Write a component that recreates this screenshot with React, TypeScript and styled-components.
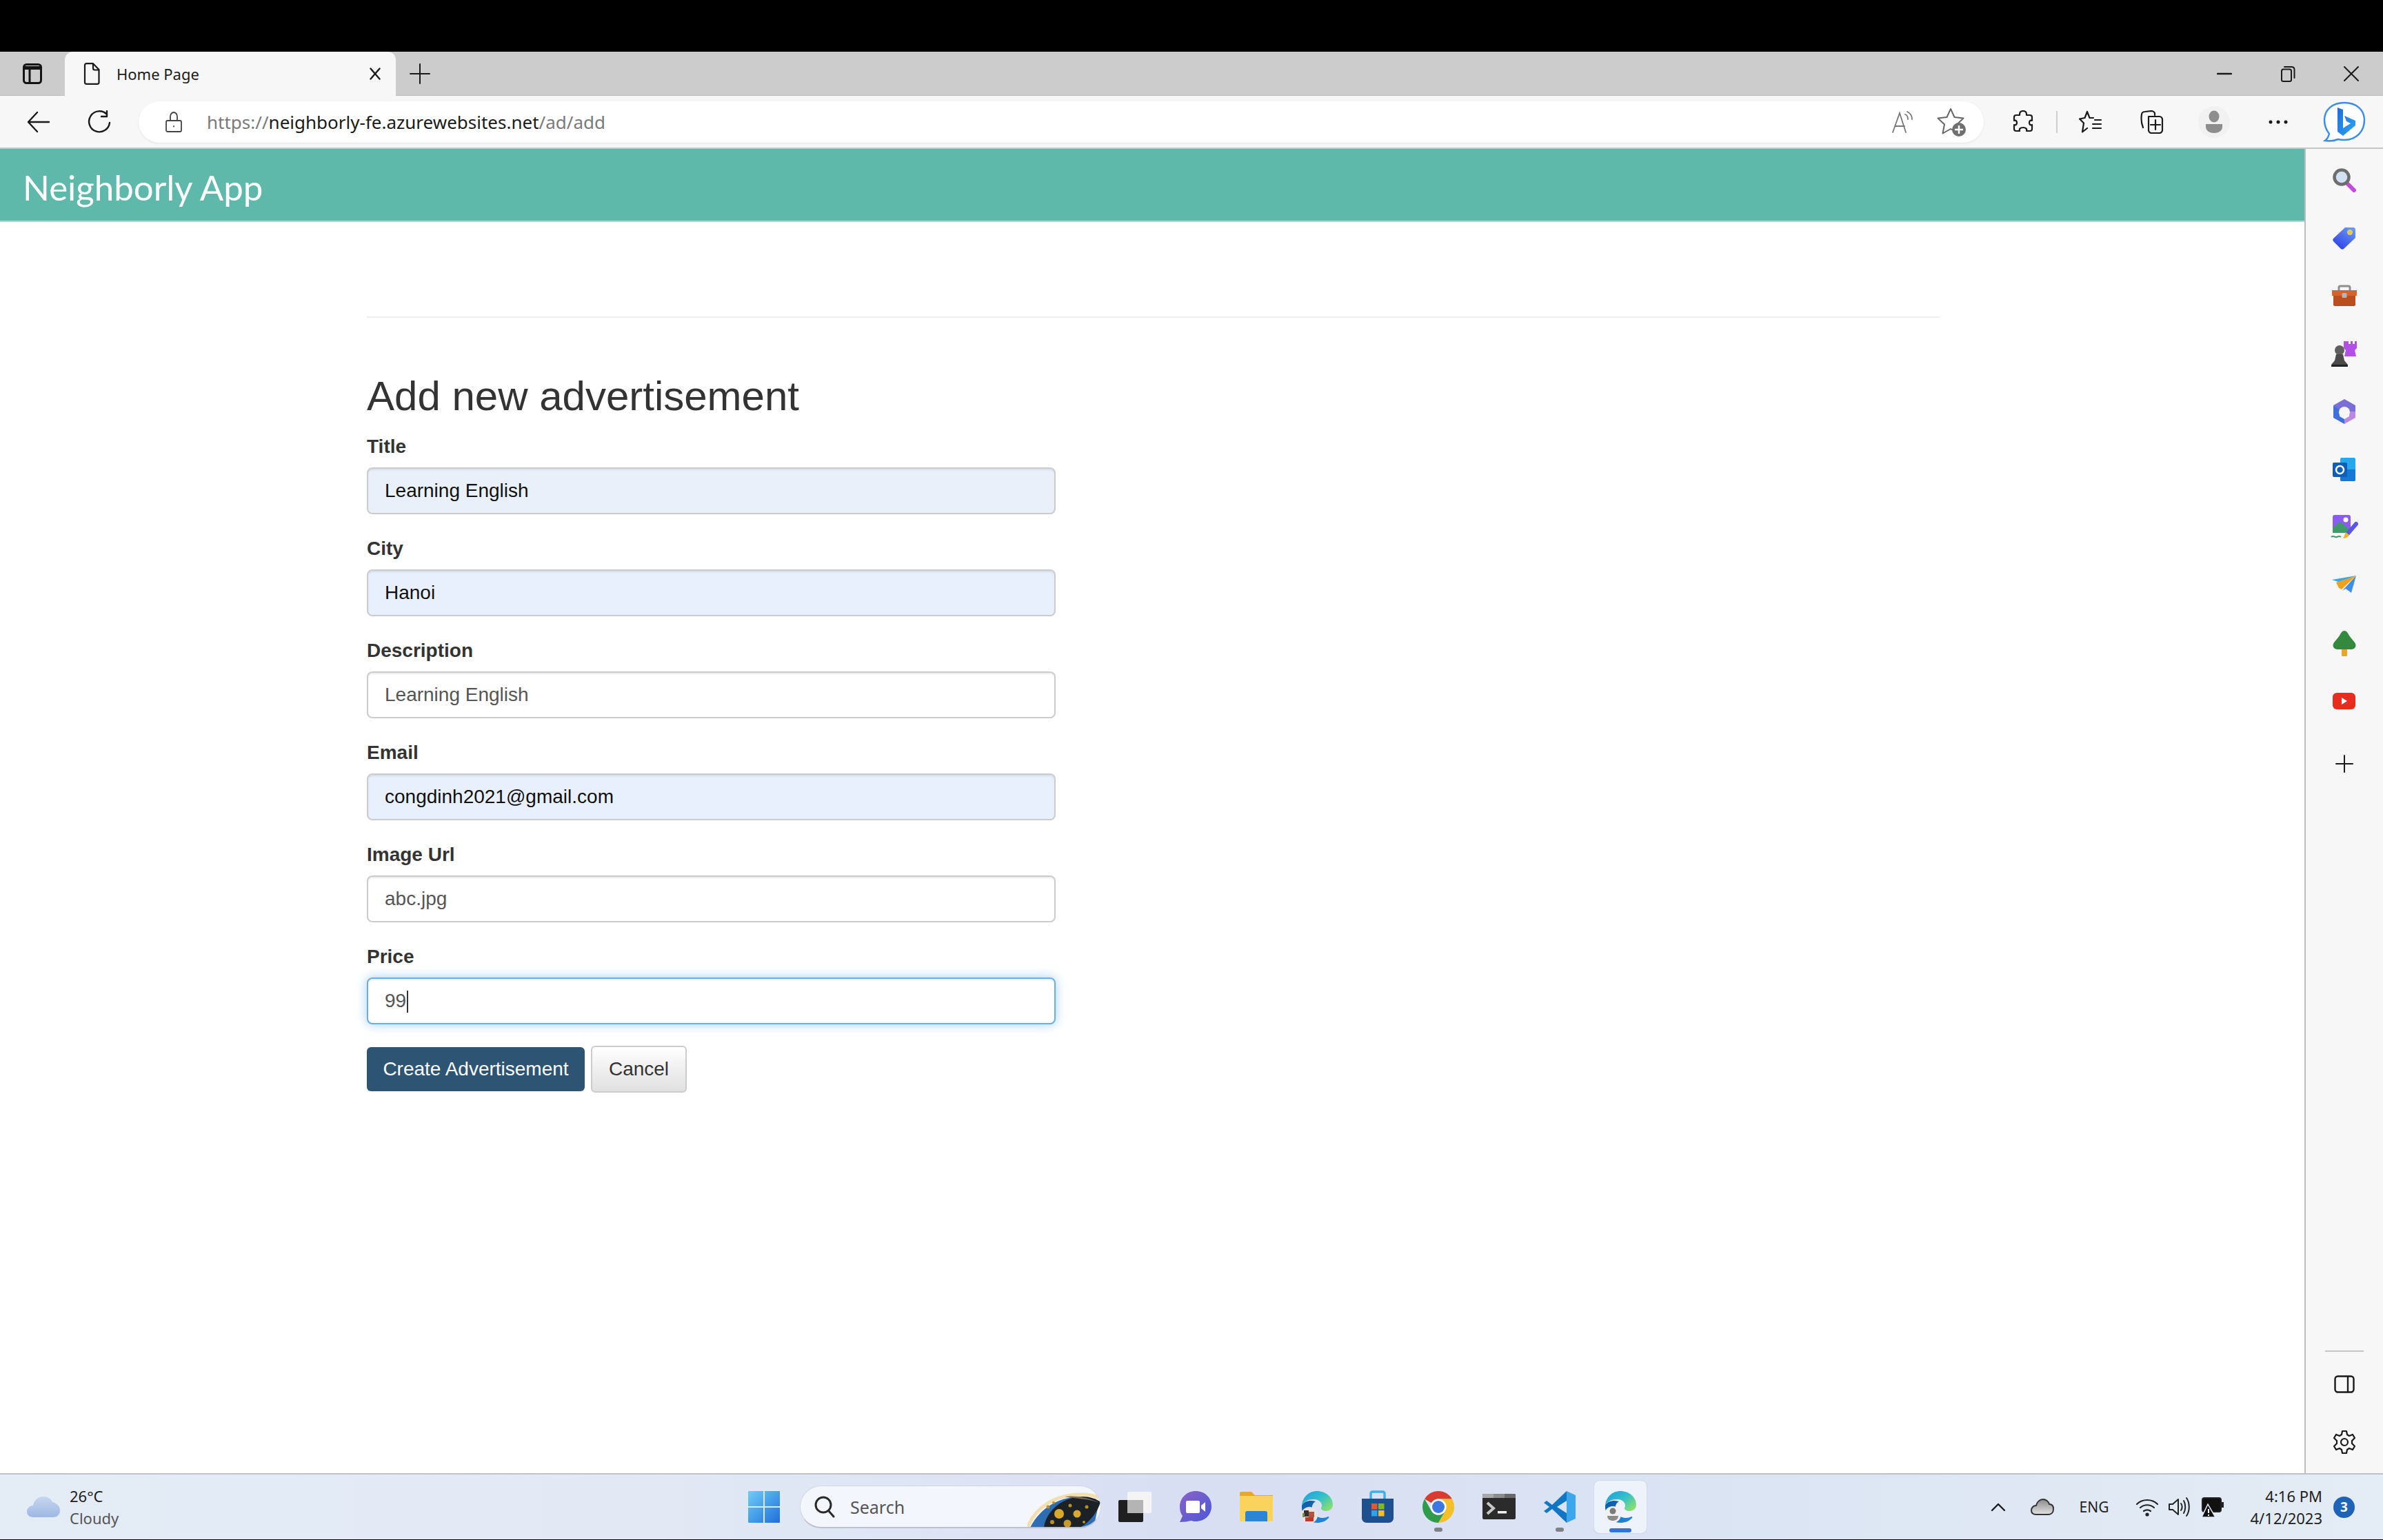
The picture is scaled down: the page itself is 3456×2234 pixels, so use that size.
import styled, { createGlobalStyle } from 'styled-components'

const GlobalStyle = createGlobalStyle`
  html, body {
    margin: 0;
    padding: 0;
    overflow: hidden;
    background: #fff;
  }
  * { box-sizing: border-box; }
`

const Screen = styled.div`
  width: 3456px;
  height: 2234px;
  display: flex;
  flex-direction: column;
  font-family: 'Liberation Sans', Arial, sans-serif;
`

const TopBlack = styled.div`
  height: 75px;
  background: #000;
  flex: none;
`

/* browser chrome */
const TabStrip = styled.div`
  height: 64px;
  flex: none;
  display: flex;
  align-items: stretch;
  background: #cccccc;
  border-bottom: 1px solid #bdbdbd;
`

const IconSlot = styled.div<{ $w: number }>`
  width: ${(p) => p.$w}px;
  flex: none;
  display: flex;
  align-items: center;
  justify-content: center;
`

const Tab = styled.div`
  width: 480px;
  flex: none;
  display: flex;
  align-items: center;
  padding: 0 22px 0 27px;
  background: #f7f7f7;
  border-radius: 12px 12px 0 0;
  margin-bottom: -1px;
`

const TabTitle = styled.span`
  margin-left: 24px;
  font-family: 'Noto Sans', sans-serif;
  font-size: 22px;
  color: #1c1c1c;
  flex: 1;
`

const WindowControls = styled.div`
  margin-left: auto;
  display: flex;
`

const Toolbar = styled.div`
  height: 77px;
  flex: none;
  display: flex;
  align-items: center;
  padding-left: 12px;
  background: #f7f7f7;
  border-bottom: 2px solid #c6c6c6;
`

const AddressBar = styled.div`
  width: 2676px;
  height: 60px;
  margin-left: 13px;
  flex: none;
  display: flex;
  align-items: center;
  padding: 0 22px 0 39px;
  background: #fff;
  border-radius: 30px;
  box-shadow: 0 1px 3px rgba(0, 0, 0, 0.08);
`

const Url = styled.div`
  margin-left: 36px;
  flex: 1;
  font-family: 'Noto Sans', sans-serif;
  font-size: 26px;
  color: #7a7a7a;
`

const UrlHost = styled.span`
  color: #1a1a1a;
`

const AddressActions = styled.div`
  display: flex;
  align-items: center;
  gap: 34px;
`

const ToolGroup = styled.div`
  display: flex;
  align-items: center;
  margin-left: 12px;
`

const ToolSep = styled.div`
  width: 2px;
  height: 32px;
  margin: 0 2px 0 3px;
  background: #cfcfcf;
`

const ProfileCircle = styled.div`
  width: 46px;
  height: 46px;
  border-radius: 50%;
  background: #f1f1f1;
  display: flex;
  align-items: center;
  justify-content: center;
`

/* page + edge sidebar */
const Middle = styled.div`
  flex: 1;
  min-height: 0;
  display: flex;
`

const Page = styled.div`
  flex: 1;
  min-width: 0;
  background: #fff;
`

const NavBar = styled.div`
  height: 106px;
  display: flex;
  align-items: center;
  padding: 6px 0 0 33px;
  background: #5fb9aa;
  border-bottom: 2px solid #a9dcd2;
`

const Brand = styled.div`
  font-family: 'Lato', sans-serif;
  font-size: 51px;
  color: #fff;
`

const Content = styled.div`
  padding: 137px 0 0 532px;
`

const Rule = styled.hr`
  width: 2281px;
  height: 2px;
  margin: 0 0 81px;
  border: 0;
  background: #eee;
`

const Form = styled.form`
  width: 999px;
`

const Heading = styled.h2`
  width: 1400px;
  margin: 0 0 20px;
  font-size: 60px;
  line-height: 66px;
  font-weight: 400;
  color: #333;
`

const FormGroup = styled.div`
  position: relative;
  margin-bottom: 30px;
`

const Label = styled.label`
  display: block;
  margin-bottom: 10px;
  font-size: 28px;
  line-height: 40px;
  font-weight: 700;
  color: #333;
`

const Field = styled.input<{ $fill?: string; $focus?: boolean }>`
  display: block;
  width: 100%;
  height: 68px;
  padding: 12px 24px;
  font-family: 'Liberation Sans', Arial, sans-serif;
  font-size: 28px;
  border-radius: 8px;
  outline: none;
  color: ${(p) => (p.$fill ? '#111' : '#555')};
  background: ${(p) => p.$fill ?? '#fff'};
  border: 2px solid ${(p) => (p.$focus ? '#66afe9' : '#ccc')};
  box-shadow: ${(p) =>
    p.$focus
      ? 'inset 0 2px 2px rgba(0,0,0,.075), 0 0 16px rgba(102,175,233,.6)'
      : 'inset 0 2px 2px rgba(0,0,0,.075)'};
`

const Caret = styled.span`
  position: absolute;
  left: 58px;
  bottom: 17px;
  width: 2px;
  height: 32px;
  background: #333;
`

const Actions = styled.div`
  display: flex;
  align-items: center;
  gap: 9px;
  margin-top: 31px;
`

const SubmitButton = styled.button`
  width: 316px;
  height: 64px;
  border: 0;
  border-radius: 6px;
  padding: 0;
  background: #2e5474;
  color: #fff;
  font-family: 'Liberation Sans', Arial, sans-serif;
  font-size: 28px;
`

const CancelButton = styled.button`
  width: 139px;
  height: 68px;
  border: 2px solid #ccc;
  border-radius: 6px;
  padding: 0;
  background: linear-gradient(#fff, #e0e0e0);
  color: #333;
  font-family: 'Liberation Sans', Arial, sans-serif;
  font-size: 28px;
`

const Sidebar = styled.aside`
  width: 114px;
  flex: none;
  display: flex;
  flex-direction: column;
  align-items: center;
  padding-top: 3px;
  background: #f7f7f7;
  border-left: 2px solid #bdbdbd;
`

const SideSlot = styled.div`
  height: 84px;
  width: 100%;
  flex: none;
  display: flex;
  align-items: center;
  justify-content: center;
`

const SideAdd = styled(SideSlot)`
  margin-top: 7px;
`

const SideFoot = styled.div`
  margin-top: auto;
  width: 100%;
  display: flex;
  flex-direction: column;
  align-items: center;
  padding-bottom: 3px;
`

const SideRule = styled.div`
  width: 56px;
  height: 2px;
  background: #c4c4c4;
  margin-bottom: 5px;
`

/* taskbar */
const Taskbar = styled.div`
  height: 97px;
  flex: none;
  display: flex;
  align-items: center;
  background: linear-gradient(90deg, #e4ecf6 0%, #e2e9f5 28%, #d9dff3 50%, #dae3f3 68%, #e4ecf5 100%);
  border-top: 2px solid #bfc3c7;
  border-bottom: 1px solid #000;
`

const Weather = styled.div`
  width: 1064px;
  flex: none;
  display: flex;
  align-items: center;
  padding-left: 38px;
`

const WeatherText = styled.div`
  margin-left: 13px;
  font-family: 'Noto Sans', sans-serif;
  font-size: 22px;
  line-height: 32px;
  color: #1d1d1d;
`

const WeatherSub = styled.div`
  color: #555;
`

const TaskIcons = styled.div`
  display: flex;
  align-items: center;
`

const SearchPill = styled.div`
  width: 437px;
  height: 62px;
  margin: 0 5px 0 8px;
  flex: none;
  display: flex;
  align-items: center;
  padding-left: 20px;
  background: #f3f6fc;
  border: 1px solid #d2d7e2;
  border-bottom: 2px solid #bcc1cc;
  border-radius: 31px;
  overflow: hidden;
`

const SearchText = styled.span`
  margin-left: 22px;
  flex: 1;
  font-family: 'Noto Sans', sans-serif;
  font-size: 25px;
  color: #555;
`

const TaskSlot = styled.div<{ $active?: boolean }>`
  position: relative;
  width: ${(p) => (p.$active ? '76px' : '88px')};
  height: 76px;
  margin: ${(p) => (p.$active ? '0 6px' : '0')};
  flex: none;
  display: flex;
  align-items: center;
  justify-content: center;
  border-radius: 8px;
  background: ${(p) => (p.$active ? '#eef2fa' : 'transparent')};
  box-shadow: ${(p) => (p.$active ? '0 0 2px rgba(0,0,0,.14)' : 'none')};
`

const RunDot = styled.span<{ $active?: boolean }>`
  position: absolute;
  bottom: ${(p) => (p.$active ? '1px' : '2px')};
  left: 50%;
  width: ${(p) => (p.$active ? '32px' : '12px')};
  height: 6px;
  margin-left: ${(p) => (p.$active ? '-16px' : '-6px')};
  border-radius: 3px;
  background: ${(p) => (p.$active ? '#2f74d8' : '#7d8087')};
`

const Tray = styled.div`
  margin-left: auto;
  display: flex;
  align-items: center;
  padding-right: 41px;
`

const TrayIcon = styled.div<{ $w: number }>`
  width: ${(p) => p.$w}px;
  flex: none;
  display: flex;
  align-items: center;
  justify-content: center;
`

const TrayLang = styled.span`
  width: 58px;
  margin-right: 20px;
  flex: none;
  text-align: center;
  font-family: 'Noto Sans', sans-serif;
  font-size: 21px;
  color: #222;
`

const Clock = styled.div`
  width: 130px;
  text-align: right;
  font-family: 'Noto Sans', sans-serif;
  font-size: 22px;
  line-height: 32px;
  color: #222;
`

const Badge = styled.div`
  width: 31px;
  height: 31px;
  margin-left: 16px;
  border-radius: 50%;
  background: #1e63b8;
  color: #fff;
  display: flex;
  align-items: center;
  justify-content: center;
  font-family: 'Noto Sans', sans-serif;
  font-size: 19px;
  font-weight: 700;
`

const Line = ({ d, w, h, vb, sw = 2, c = '#1a1a1a' }: { d: string; w: number; h: number; vb: string; sw?: number; c?: string }) => (
  <svg width={w} height={h} viewBox={vb} fill="none" stroke={c} strokeWidth={sw} strokeLinecap="round" strokeLinejoin="round">
    <path d={d} />
  </svg>
)

const PanelToggleIcon = () => (
  <svg width="28" height="30" viewBox="0 0 28 30" fill="none" stroke="#141414" strokeWidth="3">
    <rect x="1.500" y="1.500" width="25" height="27" rx="4" />
    <path d="M2 6.500h24" strokeWidth="5" />
    <path d="M10 7v21" />
  </svg>
)

const EdgeIcon = ({ id, badge }: { id: string; badge?: 'photo' | 'person' }) => (
  <svg width="48" height="48" viewBox="0 0 48 48">
    <defs>
      <linearGradient id={`${id}a`} x1="0" y1="0" x2="1" y2="0.8">
        <stop offset="0" stopColor="#1b9de2" />
        <stop offset="0.55" stopColor="#35c1c8" />
        <stop offset="1" stopColor="#8ee06a" />
      </linearGradient>
      <linearGradient id={`${id}b`} x1="0" y1="0" x2="0.6" y2="1">
        <stop offset="0" stopColor="#0c59a4" />
        <stop offset="1" stopColor="#1f85d6" />
      </linearGradient>
    </defs>
    <path d="M2 22C3 10 12 1 24 1c13 0 23 9 23 20 0 6-5 9-10 9-4 0-7-2-7-4 0-1 1-2 1-4 0-5-5-9-11-9C11 13 5 16 2 22z" fill={`url(#${id}a)`} />
    <path d="M2 22c-1 13 9 25 22 25 7 0 12-2 17-7 1-1 0-2-1-2-2 1-5 2-8 2-8 0-14-5-15-12-1-5 1-10 5-12C14 14 6 15 2 22z" fill={`url(#${id}b)`} />
    {badge === 'photo' && (
      <g>
        <circle cx="13" cy="36" r="12" fill="#e7e4df" />
        <rect x="5" y="29" width="7" height="9" fill="#3a2f2a" />
        <rect x="12" y="31" width="8" height="8" fill="#b3543f" />
        <rect x="7" y="39" width="12" height="6" fill="#c4372e" />
        <rect x="3" y="33" width="3" height="6" fill="#7b8a5b" />
      </g>
    )}
    {badge === 'person' && (
      <g>
        <circle cx="13" cy="35" r="12" fill="#eef0f2" />
        <circle cx="13" cy="30" r="4.500" fill="#7b7b7b" />
        <path d="M5 37h16c0 5-4 7-8 7s-8-2-8-7z" fill="#8b8b8b" />
      </g>
    )}
  </svg>
)

const sideIcons = [
  <svg key="search" width="36" height="36" viewBox="0 0 36 36">
    <path d="M21 22l11 11" stroke="#c24bde" strokeWidth="6" strokeLinecap="round" />
    <circle cx="14" cy="14" r="10.500" fill="#cfe1f2" stroke="#6d6d6d" strokeWidth="4.500" />
  </svg>,
  <svg key="tag" width="36" height="36" viewBox="0 0 36 36">
    <defs>
      <linearGradient id="tagFill" x1="0.9" y1="0" x2="0.2" y2="1">
        <stop offset="0" stopColor="#6b9cf2" />
        <stop offset="1" stopColor="#2c3fe8" />
      </linearGradient>
    </defs>
    <path d="M19 3h12c2 0 3 1 3 3v12L17 34c-1 1-3 1-4 0L2 23c-1-1-1-3 0-4z" fill="url(#tagFill)" />
    <circle cx="26" cy="10" r="3.500" fill="#f4c430" stroke="#e0d69a" />
  </svg>,
  <svg key="case" width="38" height="32" viewBox="0 0 38 32">
    <path d="M11 8V4c0-1.500 1-2 2-2h12c1 0 2 .5 2 2v4" fill="none" stroke="#8f8f8f" strokeWidth="3" />
    <path d="M1 8h36v8H1z" fill="#d8622a" />
    <path d="M3 16h32v13c0 1-1 2-2 2H5c-1 0-2-1-2-2z" fill="#b94e1e" />
    <rect x="15.500" y="12" width="7" height="7" rx="1.500" fill="#b5b5b5" />
  </svg>,
  <svg key="chess" width="40" height="40" viewBox="0 0 40 40">
    <path d="M23 2h3v4h3V2h3v4h3V2h3v10l-3 3 2 9H20l2-9-3-3V2h1z" fill="#b44ee8" />
    <circle cx="13" cy="15" r="7" fill="#5f5f5f" />
    <path d="M8 21h10l2 9 5 6v3H1v-3l5-6z" fill="#4b4b4b" />
    <rect x="1" y="36" width="24" height="3" rx="1.500" fill="#222" />
  </svg>,
  <svg key="m365" width="36" height="38" viewBox="0 0 36 38">
    <path d="M18 1l16 9v9l-9 0-7-6-7 4-9-7z" fill="#7a6fd6" />
    <path d="M2 10l9 6v10l7 4v7L2 28z" fill="#3f6fd8" />
    <path d="M34 19v9l-16 9v-7l7-4v-7z" fill="#b98ae0" />
    <circle cx="18" cy="20" r="8" fill="#f7f7f7" />
  </svg>,
  <svg key="outlook" width="36" height="36" viewBox="0 0 36 36">
    <rect x="12" y="1" width="22" height="34" rx="2" fill="#28a8ea" />
    <path d="M12 18h22v15c0 1-1 2-2 2H14c-1 0-2-1-2-2z" fill="#1478d4" />
    <rect x="1" y="8" width="21" height="21" rx="2" fill="#0f5fb8" />
    <circle cx="11.500" cy="18.500" r="5.500" fill="none" stroke="#fff" strokeWidth="2.500" />
  </svg>,
  <svg key="image" width="40" height="38" viewBox="0 0 40 38">
    <rect x="3" y="1" width="26" height="26" rx="3" fill="#8a5cf0" />
    <circle cx="22" cy="8" r="3.500" fill="#fff" />
    <path d="M3 20l10-9 16 12v2c0 1-1 2-2 2H3z" fill="#3f9a6a" />
    <path d="M37 14L25 28" stroke="#5a57e8" strokeWidth="6" strokeLinecap="round" />
    <path d="M22 26l5 4c-2 4-6 5-9 5 2-2 2-6 4-9z" fill="#efb52e" />
    <path d="M1 33c3-3 5 1 8 0s3-2 6 0" fill="none" stroke="#3f9a6a" strokeWidth="2" />
  </svg>,
  <svg key="send" width="36" height="28" viewBox="0 0 36 28">
    <path d="M0 6L35 0 12 10z" fill="#39a8ea" />
    <path d="M6 10L35 0 14 20 10 18z" fill="#efa21f" />
    <path d="M35 0l-7 25-8-6-5 3z" fill="#3d8fe8" />
  </svg>,
  <svg key="tree" width="36" height="38" viewBox="0 0 36 38">
    <rect x="14" y="26" width="8" height="12" rx="1" fill="#e6a72c" />
    <path d="M18 1c3 0 5 3 7 7 2 3 5 6 8 10 2 3 2 6 0 8-1 1-3 2-5 2H8c-2 0-4-1-5-2-2-2-2-5 0-8 3-4 6-7 8-10 2-4 4-7 7-7z" fill="#338a3e" />
  </svg>,
  <svg key="youtube" width="34" height="26" viewBox="0 0 34 26">
    <rect width="33" height="24" y="1" rx="6" fill="#e62d20" />
    <path d="M13 8l8 5-8 5z" fill="#fff" />
  </svg>,
]

const fields = [
  { label: 'Title', value: 'Learning English', fill: '#e9f0fa' },
  { label: 'City', value: 'Hanoi', fill: '#e8f0fe' },
  { label: 'Description', value: 'Learning English' },
  { label: 'Email', value: 'congdinh2021@gmail.com', fill: '#e8f0fe' },
  { label: 'Image Url', value: 'abc.jpg' },
  { label: 'Price', value: '99', focus: true },
]

export default function App() {
  return (
    <Screen>
      <GlobalStyle />
      <TopBlack />

      <TabStrip>
        <IconSlot $w={94}>
          <PanelToggleIcon />
        </IconSlot>
        <Tab>
          <Line w={24} h={32} vb="0 0 24 32" sw={2.2} d="M2 3.500C2 2 3 1.200 4.500 1.200H14L22.500 10V28.500c0 1.500-1 2.300-2.500 2.300H4.500C3 30.800 2 30 2 28.500zM14 1.500V8c0 1.500 1 2.500 2.500 2.500h6" />
          <TabTitle>Home Page</TabTitle>
          <Line w={16} h={18} vb="0 0 16 18" sw={2.4} d="M1.500 1.500l13 15M14.500 1.500l-13 15" />
        </Tab>
        <IconSlot $w={70}>
          <Line w={30} h={30} vb="0 0 30 30" d="M15 1v28M1 15h28" />
        </IconSlot>
        <WindowControls>
          <IconSlot $w={92}>
            <Line w={22} h={4} vb="0 0 22 4" sw={2.4} d="M1 2h20" />
          </IconSlot>
          <IconSlot $w={92}>
            <Line w={22} h={24} vb="0 0 22 24" sw={2} d="M2 8c0-1.500 1-2.500 2.500-2.500h9C15 5.500 16 6.500 16 8v13c0 1.500-1 2-2.500 2h-9C3 23 2 22.500 2 21zM6 2h10c3 0 4.500 1.500 4.500 4v12" />
          </IconSlot>
          <IconSlot $w={92}>
            <Line w={24} h={24} vb="0 0 24 24" d="M2 2l20 20M22 2L2 22" />
          </IconSlot>
        </WindowControls>
      </TabStrip>

      <Toolbar>
        <IconSlot $w={88}>
          <Line w={34} h={32} vb="0 0 34 32" sw={2.4} d="M15 2L2 16l13 14M2 16h30" />
        </IconSlot>
        <IconSlot $w={88}>
          <Line w={34} h={34} vb="0 0 34 34" sw={2.4} d="M28 6a15 15 0 1 0 4 12M28 1v8h-8" />
        </IconSlot>
        <AddressBar>
          <Line w={24} h={30} vb="0 0 24 30" sw={1.8} c="#444" d="M3 13h18c1 0 2 1 2 2v12c0 1-1 2-2 2H3c-1 0-2-1-2-2V15c0-1 1-2 2-2zM7 13V7c0-3 2-6 5-6s5 3 5 6v6M12 21v.500" />
          <Url>
            https://<UrlHost>neighborly-fe.azurewebsites.net</UrlHost>/ad/add
          </Url>
          <AddressActions>
            <svg width="32" height="34" viewBox="0 0 32 34" fill="none" stroke="#777" strokeWidth="1.800" strokeLinecap="round">
              <path d="M2 32L12 4l9 28M5 23h14" />
              <path d="M20 6c3 1 4 4 4 7M23 2c4 2 7 6 7 11" />
            </svg>
            <svg width="46" height="44" viewBox="0 0 46 44">
              <path d="M20 3l5.500 12 13 1.500-9.500 9 2.500 13L20 32 8.500 38.500 11 25.500l-9.500-9 13-1.500z" fill="none" stroke="#666" strokeWidth="2" strokeLinejoin="round" />
              <circle cx="32" cy="33" r="10" fill="#6f6f6f" />
              <path d="M32 27v12M26 33h12" stroke="#fff" strokeWidth="2.500" />
            </svg>
          </AddressActions>
        </AddressBar>
        <ToolGroup>
          <IconSlot $w={90}>
            <Line w={32} h={34} vb="0 0 32 34" sw={2.2} d="M11 6c0-3 2-5 5-5s5 2 5 5v1h5c2 0 3 1 3 3v5c-3-1-4 1-4 3s1 4 4 3v6c0 2-1 3-3 3h-5c1-3-1-5-5-5s-6 2-5 5H6c-2 0-3-1-3-3v-6c3 1 4-1 4-3s-1-4-4-3v-5c0-2 1-3 3-3h5z" />
          </IconSlot>
          <ToolSep />
          <IconSlot $w={90}>
            <Line w={34} h={34} vb="0 0 34 34" sw={2.2} d="M13 2L9.500 11 2 12.500l6 6-2 13 7-5.500M13 2l3.500 9H22M24 14h9M21 20h12M21 26h12" />
          </IconSlot>
          <IconSlot $w={90}>
            <Line w={34} h={34} vb="0 0 34 34" sw={2.2} d="M4 25C2 20 1 12 2 6c0-3 3-4 5-4l9-1c2 0 4 1 5 3v3M12 9h16c2 0 4 2 4 4v16c0 2-2 4-4 4H16c-2 0-4-2-4-4zM22 14v14M15 21h14" />
          </IconSlot>
          <IconSlot $w={90}>
            <ProfileCircle>
              <svg width="26" height="34" viewBox="0 0 26 34">
                <ellipse cx="13" cy="9" rx="7.500" ry="8.500" fill="#8d8d8d" />
                <path d="M1 20h24v4c0 6-6 9-12 9S1 30 1 24z" fill="#8d8d8d" />
              </svg>
            </ProfileCircle>
          </IconSlot>
          <IconSlot $w={96}>
            <svg width="28" height="6" viewBox="0 0 28 6" fill="#1a1a1a">
              <circle cx="3" cy="3" r="2.500" />
              <circle cx="14" cy="3" r="2.500" />
              <circle cx="25" cy="3" r="2.500" />
            </svg>
          </IconSlot>
          <IconSlot $w={96}>
            <svg width="62" height="60" viewBox="0 0 62 60">
              <defs>
                <linearGradient id="bingFill" x1="0" y1="0" x2="1" y2="1">
                  <stop offset="0" stopColor="#1f6be0" />
                  <stop offset="1" stopColor="#2da8f0" />
                </linearGradient>
              </defs>
              <path d="M31 2C14 2 2 12 2 27c0 8 3 15 7 20-1 4-3 8-6 10 7 1 14 0 19-2 3 1 6 1 9 1 17 0 29-12 29-29C60 12 48 2 31 2z" fill="#fff" stroke="#3a8ee8" strokeWidth="2.500" />
              <path d="M21 9l8 3v27l11-7-6-3-3-8 16 7v7L29 50l-8-6z" fill="url(#bingFill)" />
            </svg>
          </IconSlot>
        </ToolGroup>
      </Toolbar>

      <Middle>
        <Page>
          <NavBar>
            <Brand>Neighborly App</Brand>
          </NavBar>
          <Content>
            <Rule />
            <Form>
              <Heading>Add new advertisement</Heading>
              {fields.map((f) => (
                <FormGroup key={f.label}>
                  <Label>{f.label}</Label>
                  <Field readOnly value={f.value} $fill={f.fill} $focus={f.focus} />
                  {f.focus && <Caret />}
                </FormGroup>
              ))}
              <Actions>
                <SubmitButton type="button">Create Advertisement</SubmitButton>
                <CancelButton type="button">Cancel</CancelButton>
              </Actions>
            </Form>
          </Content>
        </Page>

        <Sidebar>
          {sideIcons.map((icon) => (
            <SideSlot key={icon.key}>{icon}</SideSlot>
          ))}
          <SideAdd>
            <Line w={26} h={26} vb="0 0 26 26" sw={2} d="M13 1v24M1 13h24" />
          </SideAdd>
          <SideFoot>
            <SideRule />
            <SideSlot>
              <svg width="30" height="26" viewBox="0 0 30 26" fill="none" stroke="#1a1a1a" strokeWidth="2.400">
                <rect x="1.500" y="1.500" width="27" height="23" rx="4" />
                <path d="M20 2v22" />
              </svg>
            </SideSlot>
            <SideSlot>
              <Line w={34} h={36} vb="0 0 34 36" sw={2.2} d="M14 2h6l1 5 3 2 5-2 3 5-4 4v4l4 4-3 5-5-2-3 2-1 5h-6l-1-5-3-2-5 2-3-5 4-4v-4L2 12l3-5 5 2 3-2zM17 13a5 5 0 1 0 0 10 5 5 0 0 0 0-10z" />
            </SideSlot>
          </SideFoot>
        </Sidebar>
      </Middle>

      <Taskbar>
        <Weather>
          <svg width="50" height="34" viewBox="0 0 50 34">
            <defs>
              <linearGradient id="cloudFill" x1="0" y1="0" x2="0" y2="1">
                <stop offset="0" stopColor="#c6d6ec" />
                <stop offset="1" stopColor="#9db8e6" />
              </linearGradient>
            </defs>
            <path d="M10 32C4 32 1 28 1 24c0-5 4-9 9-9 1-7 7-13 15-13 6 0 11 3 13 8 6 1 11 6 11 12 0 6-4 10-10 10z" fill="url(#cloudFill)" />
          </svg>
          <WeatherText>
            <div>26°C</div>
            <WeatherSub>Cloudy</WeatherSub>
          </WeatherText>
        </Weather>

        <TaskIcons>
          <TaskSlot>
            <svg width="46" height="46" viewBox="0 0 46 46">
              <defs>
                <linearGradient id="startFill" x1="0" y1="0" x2="1" y2="1">
                  <stop offset="0" stopColor="#6fcdf8" />
                  <stop offset="1" stopColor="#1e6fd8" />
                </linearGradient>
              </defs>
              <path d="M0 1c0-.5.5-1 1-1h21v22H0zM24 0h21c.5 0 1 .5 1 1v21H24zM0 24h22v22H1c-.5 0-1-.5-1-1zM24 24h22v21c0 .5-.5 1-1 1H24z" fill="url(#startFill)" />
            </svg>
          </TaskSlot>
          <SearchPill>
            <svg width="30" height="32" viewBox="0 0 30 32" fill="none" stroke="#2a2a2a" strokeWidth="3">
              <circle cx="13" cy="13" r="11" />
              <path d="M21 22l7 8" strokeLinecap="round" />
            </svg>
            <SearchText>Search</SearchText>
            <svg width="106" height="60" viewBox="0 0 106 60">
              <path d="M0 60C12 30 40 12 78 12c14 0 22 2 28 6" fill="none" stroke="#f2dfae" strokeWidth="5" />
              <path d="M4 60C16 36 40 16 76 15l28 8-8 37z" fill="#2e6db4" />
              <path d="M24 60c2-20 22-44 56-45 10 0 20 3 26 8-4 14-16 30-30 37z" fill="#1c2126" />
              <path d="M54 15c14-2 36 1 50 9-14-6-38-6-50-9z" fill="#7d6a4c" />
              <circle cx="46" cy="40" r="7" fill="#d9a72e" />
              <circle cx="72" cy="40" r="5.500" fill="#d9a72e" />
              <circle cx="58" cy="54" r="5.500" fill="#c99a2a" />
              <circle cx="30" cy="30" r="2.500" fill="#b8902a" />
              <circle cx="38" cy="24" r="2" fill="#b8902a" />
              <circle cx="62" cy="28" r="2.500" fill="#b8902a" />
              <circle cx="86" cy="30" r="2.500" fill="#b8902a" />
              <circle cx="36" cy="52" r="3" fill="#b8902a" />
              <circle cx="82" cy="52" r="2" fill="#b8902a" />
            </svg>
          </SearchPill>
          <TaskSlot>
            <svg width="50" height="46" viewBox="0 0 50 46">
              <rect x="1" y="13" width="36" height="32" rx="2" fill="#1f1f1f" />
              <rect x="14" y="1" width="35" height="31" rx="2" fill="#f4f4f4" />
              <rect x="14" y="13" width="23" height="19" fill="#b4b4b4" />
            </svg>
          </TaskSlot>
          <TaskSlot>
            <svg width="48" height="48" viewBox="0 0 48 48">
              <defs>
                <linearGradient id="chatFill" x1="0" y1="0" x2="1" y2="1">
                  <stop offset="0" stopColor="#8b62c8" />
                  <stop offset="1" stopColor="#4a58d6" />
                </linearGradient>
              </defs>
              <path d="M24 1C11 1 1 11 1 24c0 5 1 9 4 13l-4 9c7 0 12-1 16-2 2 .5 5 1 7 1 13 0 23-9 23-22S37 1 24 1z" fill="url(#chatFill)" />
              <rect x="10" y="15" width="20" height="18" rx="2" fill="#fff" />
              <path d="M32 22l6-5v14l-6-5z" fill="#fff" />
            </svg>
          </TaskSlot>
          <TaskSlot>
            <svg width="50" height="44" viewBox="0 0 50 44">
              <path d="M1 2c0-1 1-2 2-2h15l5 5h26v6H1z" fill="#e2a92a" />
              <path d="M1 6h48v37H1z" fill="#fad35c" />
              <path d="M9 31c0-2 1-3 3-3h26c2 0 3 1 3 3v12H9z" fill="#2a86d4" />
            </svg>
          </TaskSlot>
          <TaskSlot>
            <EdgeIcon id="edgeA" badge="photo" />
          </TaskSlot>
          <TaskSlot>
            <svg width="48" height="48" viewBox="0 0 48 48">
              <path d="M14 12V5c0-2 1-3 3-3h14c2 0 3 1 3 3v7" fill="none" stroke="#3cb0ea" strokeWidth="3.500" />
              <path d="M1 12h46v28c0 4-3 7-7 7H8c-4 0-7-3-7-7z" fill="#1e4f8f" />
              <rect x="15" y="19" width="8.500" height="8.500" fill="#e8562c" />
              <rect x="25" y="19" width="8.500" height="8.500" fill="#7cb82c" />
              <rect x="15" y="29" width="8.500" height="8.500" fill="#2aa4ea" />
              <rect x="25" y="29" width="8.500" height="8.500" fill="#f6bd22" />
            </svg>
          </TaskSlot>
          <TaskSlot>
            <svg width="48" height="48" viewBox="0 0 48 48">
              <path d="M4.100 12.500A23 23 0 0 1 43.900 12.500L24 12.500A11.500 11.500 0 0 0 14 18.200Z" fill="#d83b30" />
              <path d="M43.900 12.500A23 23 0 0 1 24 47L34 29.800A11.500 11.500 0 0 0 24 12.500Z" fill="#f4c02a" />
              <path d="M24 47A23 23 0 0 1 4.100 12.500L14 29.800A11.500 11.500 0 0 0 34 29.800Z" fill="#2e9c4a" />
              <circle cx="24" cy="24" r="11.500" fill="#fff" />
              <circle cx="24" cy="24" r="9" fill="#3c78e4" />
            </svg>
            <RunDot />
          </TaskSlot>
          <TaskSlot>
            <svg width="48" height="38" viewBox="0 0 48 38">
              <rect width="48" height="37" rx="2" fill="#2b2b2b" />
              <path d="M0 2c0-1 1-2 2-2h14v6H0z" fill="#a8a8a8" />
              <rect x="16" width="16" height="6" fill="#8c8c8c" />
              <path d="M32 0h14c1 0 2 1 2 2v4H32z" fill="#6a6a6a" />
              <path d="M7 13l9 8-9 8" fill="none" stroke="#c8c8c8" strokeWidth="4" />
              <rect x="22" y="25" width="13" height="3.500" fill="#f0f0f0" />
            </svg>
          </TaskSlot>
          <TaskSlot>
            <svg width="48" height="48" viewBox="0 0 48 48">
              <path d="M34 1l13 6v34l-13 6z" fill="#3ea6ea" />
              <path d="M34 1L13 21 5 15l-4 3 8 6-8 6 4 3 8-6 21 20V33L20 24l14-9z" fill="#1177c4" />
            </svg>
            <RunDot />
          </TaskSlot>
          <TaskSlot $active>
            <EdgeIcon id="edgeB" badge="person" />
            <RunDot $active />
          </TaskSlot>
        </TaskIcons>

        <Tray>
          <TrayIcon $w={36}>
            <Line w={22} h={14} vb="0 0 22 14" sw={2.4} d="M2 12L11 3l9 9" />
          </TrayIcon>
          <TrayIcon $w={92}>
            <svg width="34" height="26" viewBox="0 0 34 26">
              <defs>
                <linearGradient id="trayCloud" x1="0" y1="0" x2="0" y2="1">
                  <stop offset="0" stopColor="#8a8a8a" />
                  <stop offset="1" stopColor="#e2e2e2" />
                </linearGradient>
              </defs>
              <path d="M8 24c-4 0-7-2-7-6s3-7 7-7c1-5 5-9 10-9 4 0 8 3 9 7 4 0 6 3 6 7 0 5-3 8-7 8z" fill="url(#trayCloud)" stroke="#333" strokeWidth="2" />
            </svg>
          </TrayIcon>
          <TrayLang>ENG</TrayLang>
          <TrayIcon $w={56}>
            <svg width="34" height="28" viewBox="0 0 34 28" fill="none" stroke="#222" strokeWidth="2.200" strokeLinecap="round">
              <path d="M2 10c8-8 22-8 30 0M7 15c6-5 14-5 20 0M12 20c3-2 7-2 10 0" />
              <circle cx="17" cy="25" r="1.500" fill="#222" />
            </svg>
          </TrayIcon>
          <TrayIcon $w={38}>
            <svg width="32" height="32" viewBox="0 0 32 32" fill="none" stroke="#222" strokeWidth="2" strokeLinejoin="round">
              <path d="M1 12h5l8-7v22l-8-7H1z" />
              <path d="M18 11c2 3 2 7 0 10M22 7c3 5 3 13 0 18M26 3c5 7 5 19 0 26" strokeLinecap="round" />
            </svg>
          </TrayIcon>
          <TrayIcon $w={58}>
            <svg width="34" height="32" viewBox="0 0 34 32">
              <rect x="2" y="3" width="27" height="20" rx="3" fill="#111" stroke="#222" strokeWidth="2" />
              <rect x="30" y="9" width="3" height="8" fill="#222" />
              <path d="M10 12L1 31h20z" fill="#111" stroke="#e4ecf6" strokeWidth="1.500" />
              <path d="M11 19v6M11 27v2" stroke="#fff" strokeWidth="2" />
            </svg>
          </TrayIcon>
          <Clock>
            <div>4:16 PM</div>
            <div>4/12/2023</div>
          </Clock>
          <Badge>3</Badge>
        </Tray>
      </Taskbar>
    </Screen>
  )
}
